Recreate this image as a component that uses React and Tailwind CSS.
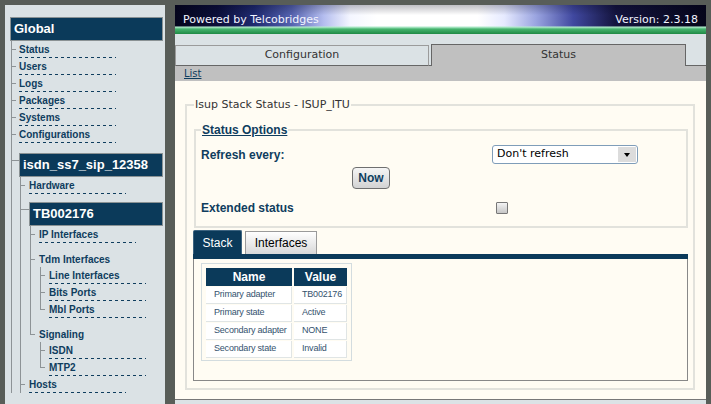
import React from "react";

const line = "bg-[#8d9396]";
const dashed =
  "h-px w-[97px] bg-[repeating-linear-gradient(90deg,#0f3d5e_0px,#0f3d5e_3px,transparent_3px,transparent_6px)]";
const dejavu = "font-['DejaVu_Sans',sans-serif]";

const tree = [
  { label: "Status" },
  { label: "Users" },
  { label: "Logs" },
  { label: "Packages" },
  { label: "Systems" },
  { label: "Configurations" },
  {
    box: "isdn_ss7_sip_12358",
    loose: true,
    open: true,
    children: [
      { label: "Hardware" },
      {
        box: "TB002176",
        children: [
          { label: "IP Interfaces" },
          {
            group: "Tdm Interfaces",
            children: [
              { label: "Line Interfaces" },
              { label: "Bits Ports" },
              { label: "Mbl Ports" },
            ],
          },
          {
            group: "Signaling",
            children: [{ label: "ISDN" }, { label: "MTP2" }],
          },
        ],
      },
      { label: "Hosts" },
    ],
  },
];

function Box({ text }) {
  return (
    <div className="flex h-[24px] items-center border border-[#8a9294] bg-[#0b3a5a] px-[3px] text-[13px] font-bold text-white">
      {text}
    </div>
  );
}

function Branch({ nodes, open, top }) {
  return (
    <div className="ml-[1px] flex flex-col">
      {nodes.map((n, i) => (
        <Node key={i} node={n} top={top} last={i === nodes.length - 1 && !open} />
      ))}
    </div>
  );
}

function Node({ node, last, top }) {
  let seg = "h-[8px]";
  if (node.box) seg = node.loose ? "h-[17px]" : "h-[15px]";
  if (node.group) seg = "h-[16px]";

  let content;
  if (node.box) {
    content = (
      <div className={node.loose ? "pt-[10px]" : "pt-[8px]"}>
        <Box text={node.box} />
        <Branch nodes={node.children} open={node.open} />
      </div>
    );
  } else if (node.group) {
    content = (
      <div className="pt-[10px]">
        <div className="mb-[1px] h-[13px] text-[10px] font-bold leading-[13px] text-[#0f3d5e]">
          {node.group}
        </div>
        <Branch nodes={node.children} />
      </div>
    );
  } else {
    content = (
      <div className="pt-[2px]">
        <div className="h-[13px] text-[10px] font-bold leading-[13px] text-[#0f3d5e]">
          {node.label}
        </div>
        <div className={`mt-[1px] ${dashed}`} />
      </div>
    );
  }

  return (
    <div className="flex">
      <div className={`flex shrink-0 flex-col ${top ? "w-[8px]" : "w-[9px]"}`}>
        <div className={`${seg} border-l border-[#8d9396]`} />
        <div className={`h-px ${node.box ? "w-full" : "w-[5px]"} ${line}`} />
        {!last && <div className="flex-1 border-l border-[#8d9396]" />}
      </div>
      <div className="min-w-0 flex-1">{content}</div>
    </div>
  );
}

function Sidebar() {
  return (
    <div className="h-full w-[160px] shrink-0 overflow-hidden bg-[#dbe2e5] pl-[5px] pr-[2px] pt-[12px]">
      <Box text="Global" />
      <Branch nodes={tree} open top />
    </div>
  );
}

function Banner() {
  return (
    <div
      className={`flex h-[29px] items-center justify-between px-[8px] pt-[2px] text-[11px] text-[#f2f4ff] ${dejavu} bg-[linear-gradient(180deg,rgba(0,0,25,0.25)_0%,transparent_35%,transparent_72%,#b4ecce_76%,#46b46e_83%,#1f8a45_100%),linear-gradient(90deg,#05051c_0%,#0c0f3a_8%,#1f2a70_15%,#5563b0_22%,#b4bdef_28%,#f4f6ff_33%,#ffffff_38%,#ffffff_57%,#e6eaff_62%,#9aa4e0_68%,#4048a0_75%,#14143e_83%,#06061a_100%)]`}
    >
      <span>Powered by Telcobridges</span>
      <span>Version: 2.3.18</span>
    </div>
  );
}

function Tabs() {
  return (
    <div className={`flex h-[32px] items-end bg-[#dbe2e5] text-[11px] text-[#333] ${dejavu}`}>
      <div className="flex h-[21px] w-[254px] items-center justify-center border border-[#9b9b9b] border-b-[#666]">
        Configuration
      </div>
      <div className="h-px w-[2px] bg-[#666]" />
      <div className="flex h-[22px] w-[255px] items-center justify-center border border-b-0 border-[#666] bg-[#c0c0c0]">
        Status
      </div>
      <div className="h-px flex-1 bg-[#666]" />
    </div>
  );
}

const rows = [
  ["Primary adapter", "TB002176"],
  ["Primary state", "Active"],
  ["Secondary adapter", "NONE"],
  ["Secondary state", "Invalid"],
];

function StackTable() {
  return (
    <div className="w-[151px] border border-[#d3dcdf] px-[4px] pb-[2px] pt-[4px]">
      <div className="grid grid-cols-[86px_53px] gap-x-[2px] gap-y-[1px]">
        <div className="flex h-[18px] items-center justify-center bg-[#0b3a5a] text-[12px] font-bold text-white">
          Name
        </div>
        <div className="flex h-[18px] items-center justify-center bg-[#0b3a5a] text-[12px] font-bold text-white">
          Value
        </div>
        {rows.map(([k, v]) => (
          <React.Fragment key={k}>
            <div className="flex h-[17px] items-center whitespace-nowrap border-b border-r border-[#e0e5e5] bg-white pl-[8px] text-[9px] tracking-[-0.2px] text-[#34526e]">
              {k}
            </div>
            <div className="flex h-[17px] items-center whitespace-nowrap border-b border-r border-[#e0e5e5] bg-white pl-[8px] text-[9px] tracking-[-0.2px] text-[#34526e]">
              {v}
            </div>
          </React.Fragment>
        ))}
      </div>
    </div>
  );
}

function Content() {
  return (
    <div className="h-[318px] bg-[#fffcf3] pt-[17px]">
      <fieldset className="ml-[10px] mr-[11px] border-2 border-[#e2e2dc] pb-[7px] pl-[7px] pr-[5px]">
        <legend className={`px-[1px] text-[11px] leading-[13px] text-[#333] ${dejavu}`}>
          Isup Stack Status - ISUP_ITU
        </legend>
        <fieldset className="mt-[12px] border-2 border-[#e2e2dc] pb-[8px] pl-[5px]">
          <legend className="px-[1px] text-[12px] font-bold leading-[14px] text-[#0f3d5e] underline">
            Status Options
          </legend>
          <div className="mt-[8px] flex h-[19px] items-center">
            <div className="w-[291px] text-[12px] font-bold text-[#0f3d5e]">Refresh every:</div>
            <div className="flex h-[19px] w-[146px] items-center rounded-[3px] border border-[#7f9db9] bg-white">
              <span className={`pl-[4px] text-[11px] text-black ${dejavu}`}>Don't refresh</span>
              <div className="ml-auto mr-[1px] flex h-[15px] w-[18px] items-center justify-center bg-[#dcdcdc]">
                <svg width="6" height="4" viewBox="0 0 6 4">
                  <path d="M0 0H6L3 4Z" fill="#000" />
                </svg>
              </div>
            </div>
          </div>
          <div className="mt-[1px] pl-[151px]">
            <button className="h-[22px] w-[38px] rounded-[4px] border border-[#6f6f6f] bg-gradient-to-b from-[#f5f5f5] to-[#d3d3d3] text-[12px] font-bold text-[#0f3d5e]">
              Now
            </button>
          </div>
          <div className="mt-[9px] flex h-[20px] items-center">
            <div className="w-[291px] text-[12px] font-bold text-[#0f3d5e]">Extended status</div>
            <div className="ml-[4px] h-[12px] w-[12px] rounded-[1px] border border-[#777] bg-gradient-to-b from-[#f4f4f4] to-[#c6c6c6]" />
          </div>
        </fieldset>
        <div className="-ml-px mt-[2px] flex items-end text-[12px]">
          <div className="flex h-[24px] w-[49px] items-center justify-center rounded-t-[2px] border border-b-0 border-[#3d6480] bg-[#0b3a5a] text-white">
            Stack
          </div>
          <div className="ml-[3px] flex h-[23px] w-[72px] items-center justify-center border border-b-0 border-[#9a9a9a] bg-gradient-to-b from-white to-[#d8d8d8] text-black">
            Interfaces
          </div>
        </div>
        <div className="-ml-px h-[5px] bg-[#0b3a5a]" />
        <div className="-ml-px border border-t-0 border-[#888] pb-[19px] pl-[7px] pt-[4px]">
          <StackTable />
        </div>
      </fieldset>
    </div>
  );
}

function Main() {
  return (
    <div className="flex w-[531px] shrink-0 flex-col">
      <Banner />
      <Tabs />
      <div className="flex h-[15px] items-center bg-[#c0c0c0] pl-[9px]">
        <span className={`text-[10px] text-[#0f3d5e] underline ${dejavu}`}>List</span>
      </div>
      <Content />
      <div className="h-px bg-[#777]" />
      <div className="flex-1 bg-[#dbe2e5]" />
    </div>
  );
}

export default function App() {
  return (
    <div className="flex h-[404px] w-[711px] gap-[10px] overflow-hidden bg-[#585d58] pl-[5px] pt-[5px] font-['Liberation_Sans',Arial,sans-serif]">
      <Sidebar />
      <Main />
    </div>
  );
}
